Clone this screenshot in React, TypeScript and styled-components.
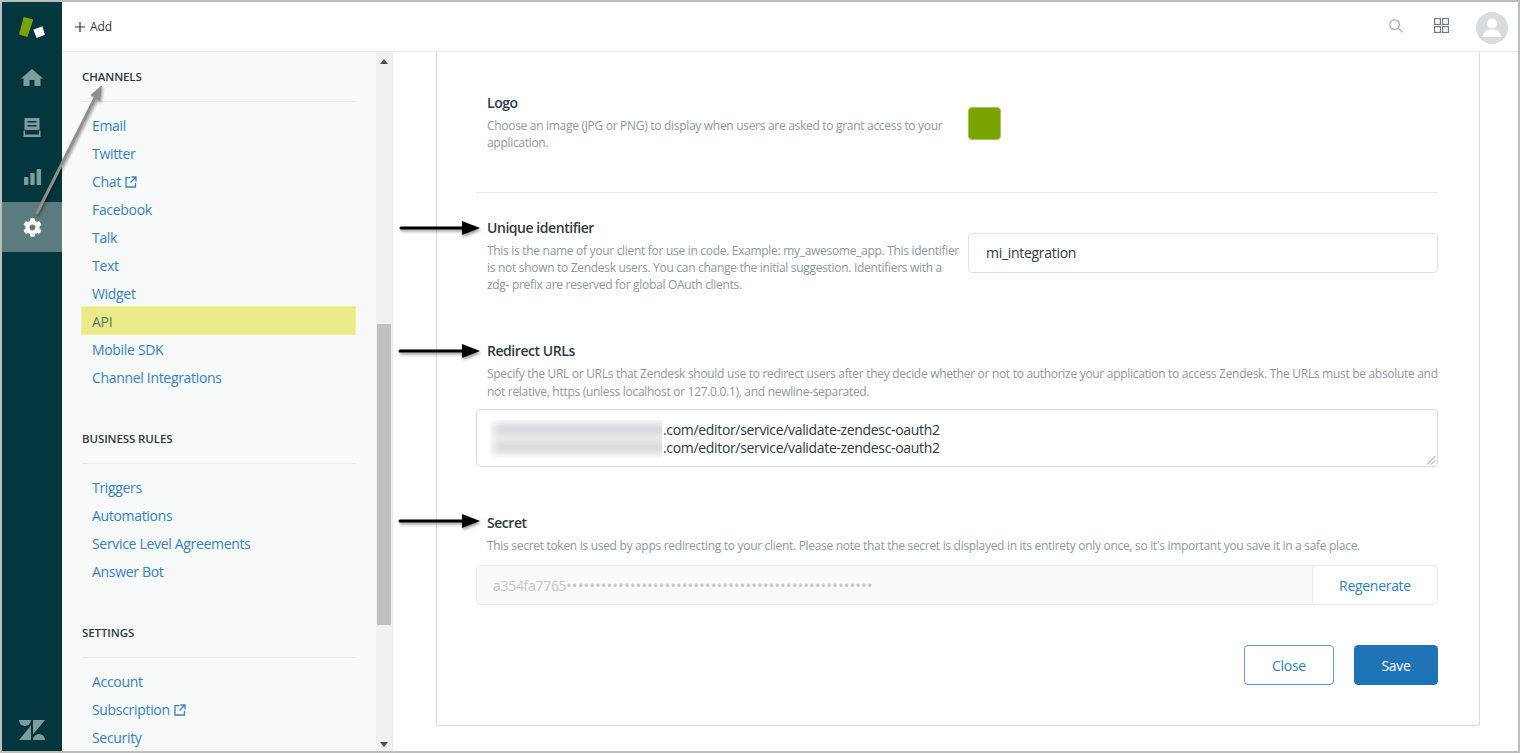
import React from 'react';
import styled, { createGlobalStyle } from 'styled-components';
import { FaCog } from 'react-icons/fa';

const FONT = `"Open Sans", "Noto Sans", "Liberation Sans", sans-serif`;
const LINK = '#3381c2';

const GlobalStyle = createGlobalStyle`
  html, body { margin: 0; padding: 0; overflow: hidden; background: #fff; }
  * { box-sizing: border-box; }
  body { font-family: ${FONT}; color: #2f3941; }
`;

const Frame = styled.div`
  position: relative;
  width: 1520px;
  height: 753px;
  border: 2px solid #bdbdbd;
  display: flex;
  overflow: hidden;
  background: #fff;
`;

const Rail = styled.nav`
  width: 60px;
  flex: none;
  background: #03363d;
  display: flex;
  flex-direction: column;
`;

const RailLogo = styled.div`
  height: 50px;
  display: flex;
  align-items: center;
  justify-content: center;
`;

const RailItem = styled.div<{ $active?: boolean }>`
  height: 50px;
  display: flex;
  align-items: center;
  justify-content: center;
  color: ${(p) => (p.$active ? '#fff' : '#7f9b9e')};
  background: ${(p) => (p.$active ? '#5c7b7e' : 'transparent')};
`;

const RailFoot = styled.div`
  margin-top: auto;
  height: 31px;
  display: flex;
  justify-content: center;
  color: #7f9b9e;
`;

const Body = styled.div`
  flex: 1;
  min-width: 0;
  display: flex;
  flex-direction: column;
`;

const Header = styled.header`
  height: 50px;
  flex: none;
  border-bottom: 1px solid #e9ebed;
  display: flex;
  align-items: center;
  padding: 0 10px 2px 13px;
`;

const AddButton = styled.div`
  display: flex;
  align-items: center;
  gap: 5px;
  padding-top: 3px;
  font-size: 12px;
  line-height: 16px;
  letter-spacing: -0.1px;
  color: #2f3941;
`;

const HeaderTools = styled.div`
  margin-left: auto;
  display: flex;
  align-items: center;
`;

const ToolIcon = styled.span<{ $gap: number }>`
  display: flex;
  margin-right: ${(p) => p.$gap}px;
  color: #87929d;
`;

const Avatar = styled.div`
  width: 32px;
  height: 32px;
  border-radius: 50%;
  margin-top: 4px;
  background: #d8dcde;
  display: flex;
  align-items: center;
  justify-content: center;
`;

const Columns = styled.div`
  flex: 1;
  min-height: 0;
  display: flex;
`;

const Sidebar = styled.aside`
  width: 331px;
  flex: none;
  display: flex;
  background: #f8f9f9;
  border-right: 1px solid #e9ebed;
`;

const SideScroll = styled.div`
  flex: 1;
  min-width: 0;
  overflow: hidden;
  padding: 14px 20px 0 20px;
`;

const Group = styled.section`
  margin-bottom: 36px;
`;

const GroupTitle = styled.h3`
  margin: 0 0 10px;
  height: 36px;
  line-height: 22px;
  padding-bottom: 13px;
  border-bottom: 1px solid #e9ebed;
  font-size: 11.5px;
  font-weight: 600;
  letter-spacing: -0.1px;
  color: #2f3941;
`;

const SideLink = styled.div<{ $on?: boolean }>`
  height: ${(p) => (p.$on ? 29 : 28)}px;
  margin: ${(p) => (p.$on ? '-2px 0 1px -1px' : '0')};
  padding: ${(p) => (p.$on ? '3px 0 0 11px' : '0 0 0 10px')};
  line-height: 28px;
  font-size: 14px;
  letter-spacing: -0.32px;
  color: ${(p) => (p.$on ? '#55756f' : LINK)};
  background: ${(p) => (p.$on ? '#e9ea8a' : 'transparent')};
  box-shadow: ${(p) => (p.$on ? 'inset 0 0 0 1px #f4f48e' : 'none')};
  display: flex;
  align-items: center;
  gap: 4px;
`;

const ScrollTrack = styled.div`
  width: 16px;
  flex: none;
  background: #f1f1f1;
  position: relative;
  display: flex;
  flex-direction: column;
  align-items: center;
  justify-content: space-between;
  padding: 7px 0 4px;
`;

const ScrollThumb = styled.div`
  position: absolute;
  left: 1px;
  right: 1px;
  top: 272px;
  height: 301px;
  background: #c1c1c1;
`;

const Main = styled.main`
  flex: 1;
  min-width: 0;
  overflow: hidden;
  padding: 0 38px 0 43px;
`;

const Card = styled.div`
  border: 1px solid #d8dcde;
  border-top: none;
  border-radius: 0 0 3px 3px;
  padding: 40px 41px 40px 39px;
`;

const FieldRow = styled.div<{ $ruled?: boolean }>`
  display: grid;
  grid-template-columns: 492px 1fr;
  padding-bottom: ${(p) => (p.$ruled ? 41 : 0)}px;
  border-bottom: ${(p) => (p.$ruled ? '1px solid #e9ebed' : 'none')};
`;

const FieldText = styled.div`
  padding-left: 11px;
  padding-right: 6px;
`;

const FieldBlock = styled.div<{ $top: number }>`
  margin-top: ${(p) => p.$top}px;
`;

const Label = styled.div`
  font-size: 14px;
  line-height: 22px;
  font-weight: 600;
  letter-spacing: -0.45px;
  color: #2f3941;
`;

const Hint = styled.p<{ $lh?: number; $inset?: boolean }>`
  margin: 3px ${(p) => (p.$inset ? -4 : 0)}px 0 0;
  padding-left: ${(p) => (p.$inset ? 11 : 0)}px;
  font-size: 12px;
  line-height: ${(p) => p.$lh ?? 17}px;
  letter-spacing: -0.3px;
  color: #8f979d;
`;

const Swatch = styled.div`
  width: 33px;
  height: 33px;
  margin-top: 15px;
  border-radius: 4px;
  background: #78a300;
  border: 1px solid #a8c45a;
`;

const TextBox = styled.div`
  height: 40px;
  margin-top: 16px;
  padding-left: 17px;
  border: 1px solid #e0e3e5;
  border-radius: 4px;
  line-height: 38px;
  font-size: 14px;
  letter-spacing: -0.3px;
  color: #2f3941;
`;

const UrlBox = styled.div`
  position: relative;
  height: 58px;
  margin-top: 8px;
  padding: 11px 0 0 186px;
  border: 1px solid #d8dcde;
  border-radius: 4px;
  font-size: 14px;
  line-height: 18px;
  letter-spacing: -0.33px;
  color: #2f3941;
`;

const BlurredUrl = styled.div`
  position: absolute;
  left: 13px;
  top: 10px;
  width: 172px;
  height: 38px;
  overflow: hidden;
`;

const BlurredLine = styled.div<{ $y: number }>`
  position: absolute;
  left: 3px;
  right: -6px;
  top: ${(p) => p.$y}px;
  height: 14px;
  background: #d6d8da;
  filter: blur(4.5px);
`;

const ResizeGrip = styled.svg`
  position: absolute;
  right: 1px;
  bottom: 1px;
`;

const SecretGroup = styled.div`
  margin-top: 10px;
  height: 40px;
  display: flex;
  border: 1px solid #e9ebed;
  border-radius: 4px;
  overflow: hidden;
`;

const SecretValue = styled.div`
  flex: 1;
  background: #f8f9f9;
  padding-left: 16px;
  line-height: 40px;
  font-size: 14px;
  letter-spacing: -0.3px;
  color: #c2c8cc;
  white-space: nowrap;
`;

const SecretDots = styled.span`
  letter-spacing: 0.52px;
`;

const SecretAction = styled.div`
  width: 125px;
  border-left: 1px solid #e9ebed;
  text-align: center;
  line-height: 40px;
  font-size: 14px;
  letter-spacing: -0.3px;
  color: ${LINK};
`;

const Actions = styled.div`
  margin-top: 40px;
  display: flex;
  justify-content: flex-end;
  gap: 20px;
`;

const Button = styled.div<{ $primary?: boolean; $w: number }>`
  width: ${(p) => p.$w}px;
  height: 40px;
  border-radius: 4px;
  border: 1px solid ${(p) => (p.$primary ? '#1f73b7' : '#5b9bcf')};
  background: ${(p) => (p.$primary ? '#1f73b7' : '#fff')};
  color: ${(p) => (p.$primary ? '#fff' : LINK)};
  text-align: center;
  line-height: 40px;
  font-size: 14px;
  letter-spacing: -0.3px;
`;

const Annotations = styled.svg`
  position: absolute;
  left: -2px;
  top: -2px;
  pointer-events: none;
`;

const ArrowShape = styled.g`
  filter: drop-shadow(1px 2px 1.5px rgba(0, 0, 0, 0.4));
`;

const ExternalIcon = () => (
  <svg width="12" height="12" viewBox="0 0 12 12" fill="none" stroke="currentColor" strokeWidth="1.3">
    <path d="M5 1.6H1v9.4h9.4V7" />
    <path d="M6.5 1h4.5v4.5M11 1 5.5 6.500" />
  </svg>
);

const channels = ['Email', 'Twitter', 'Chat', 'Facebook', 'Talk', 'Text', 'Widget', 'API', 'Mobile SDK', 'Channel Integrations'];
const businessRules = ['Triggers', 'Automations', 'Service Level Agreements', 'Answer Bot'];
const settings = ['Account', 'Subscription', 'Security'];
const external = ['Chat', 'Subscription'];

const NavGroup = ({ title, items }: { title: string; items: string[] }) => (
  <Group>
    <GroupTitle>{title}</GroupTitle>
    {items.map((item) => (
      <SideLink key={item} $on={item === 'API'}>
        {item}
        {external.includes(item) && <ExternalIcon />}
      </SideLink>
    ))}
  </Group>
);

const BlackArrow = ({ y, x1 }: { y: number; x1: number }) => (
  <ArrowShape>
    <path d={`M${x1} ${y}H466`} stroke="#000" strokeWidth="3" strokeLinecap="round" />
    <path d={`M462 ${y - 7}L480 ${y}L462 ${y + 7}Z`} fill="#000" />
  </ArrowShape>
);

export default function App() {
  return (
    <>
      <GlobalStyle />
      <Frame>
        <Rail>
          <RailLogo>
            <svg width="28" height="23" viewBox="0 0 28 23">
              <path d="M5.700 1 15.300 3.500 9.300 21 1 18.500Z" fill="#78a300" />
              <path d="M15.300 13.700 24.300 10.300 27 18.700 18.700 22Z" fill="#fff" />
            </svg>
          </RailLogo>
          <RailItem>
            <svg width="22" height="17" viewBox="0 0 22 17" fill="currentColor">
              <path d="M11 0 22 9.500H19.500V17H13.500V11H8.500V17H2.500V9.500H0Z" />
            </svg>
          </RailItem>
          <RailItem>
            <svg width="18" height="19" viewBox="0 0 18 19" fill="currentColor">
              <path d="M1.500 0h15v12h-15zM4.500 3v1.600h9V3zM4.500 7v1.600h9V7z" fillRule="evenodd" />
              <path d="M0.500 12.500H2V16.500H16V12.500H17.500V19H0.500z" />
            </svg>
          </RailItem>
          <RailItem>
            <svg width="17" height="16" viewBox="0 0 17 16" fill="currentColor">
              <rect x="0" y="8" width="4.4" height="8" rx="0.8" />
              <rect x="6.300" y="4" width="4.4" height="12" rx="0.8" />
              <rect x="12.600" y="0" width="4.4" height="16" rx="0.8" />
            </svg>
          </RailItem>
          <RailItem $active>
            <FaCog size={19} />
          </RailItem>
          <RailFoot>
            <svg width="26" height="20" viewBox="0 0 26 20" fill="currentColor">
              <path d="M0 0h12a6 6 0 0 1-12 0z" />
              <path d="M12 5.500V20H0z" />
              <path d="M14 0h12L14 14.500z" />
              <path d="M14 20a6 6 0 0 1 12 0z" />
            </svg>
          </RailFoot>
        </Rail>
        <Body>
          <Header>
            <AddButton>
              <svg width="10" height="10" viewBox="0 0 10 10" stroke="#2f3941" strokeWidth="1.2">
                <path d="M5 0v10M0 5h10" />
              </svg>
              Add
            </AddButton>
            <HeaderTools>
              <ToolIcon $gap={31}>
                <svg width="14" height="14" viewBox="0 0 14 14" fill="none" stroke="#a5adb3" strokeWidth="1.2">
                  <circle cx="5.600" cy="5.600" r="4.800" />
                  <path d="M9 9l4.400 4.400" />
                </svg>
              </ToolIcon>
              <ToolIcon $gap={27}>
                <svg width="15" height="15" viewBox="0 0 15 15" fill="none" stroke="#68737d" strokeWidth="1.1">
                  <rect x="0.600" y="0.600" width="5.800" height="5.800" />
                  <rect x="8.600" y="0.600" width="5.800" height="5.800" />
                  <rect x="0.600" y="8.600" width="5.800" height="5.800" />
                  <rect x="8.600" y="8.600" width="5.800" height="5.800" />
                </svg>
              </ToolIcon>
              <Avatar>
                <svg width="18" height="19" viewBox="0 0 18 19" fill="#fff">
                  <circle cx="9" cy="5.500" r="5" />
                  <path d="M0 19c0-5 4-7.500 9-7.500s9 2.500 9 7.500z" />
                </svg>
              </Avatar>
            </HeaderTools>
          </Header>
          <Columns>
            <Sidebar>
              <SideScroll>
                <NavGroup title="CHANNELS" items={channels} />
                <NavGroup title="BUSINESS RULES" items={businessRules} />
                <NavGroup title="SETTINGS" items={settings} />
              </SideScroll>
              <ScrollTrack>
                <svg width="8" height="5" viewBox="0 0 8 5" fill="#505050">
                  <path d="M4 0l4 5H0z" />
                </svg>
                <ScrollThumb />
                <svg width="8" height="5" viewBox="0 0 8 5" fill="#505050">
                  <path d="M0 0h8L4 5z" />
                </svg>
              </ScrollTrack>
            </Sidebar>
            <Main>
              <Card>
                <FieldRow $ruled>
                  <FieldText>
                    <Label>Logo</Label>
                    <Hint>Choose an image (JPG or PNG) to display when users are asked to grant access to your application.</Hint>
                  </FieldText>
                  <div>
                    <Swatch />
                  </div>
                </FieldRow>
                <FieldBlock $top={24}>
                  <FieldRow>
                    <FieldText>
                      <Label>Unique identifier</Label>
                      <Hint>
                        This is the name of your client for use in code. Example: my_awesome_app. This identifier is not shown to Zendesk users. You can change the initial suggestion. Identifiers with a zdg- prefix are reserved for global OAuth clients.
                      </Hint>
                    </FieldText>
                    <TextBox>mi_integration</TextBox>
                  </FieldRow>
                </FieldBlock>
                <FieldBlock $top={47}>
                  <FieldText>
                    <Label>Redirect URLs</Label>
                  </FieldText>
                  <Hint $lh={18} $inset>
                    Specify the URL or URLs that Zendesk should use to redirect users after they decide whether or not to authorize your application to access Zendesk. The URLs must be absolute and not relative, https (unless localhost or 127.0.0.1), and newline-separated.
                  </Hint>
                  <UrlBox>
                    <BlurredUrl>
                      <BlurredLine $y={3} />
                      <BlurredLine $y={20} />
                    </BlurredUrl>
                    .com/editor/service/validate-zendesc-oauth2
                    <br />
                    .com/editor/service/validate-zendesc-oauth2
                    <ResizeGrip width="10" height="10" viewBox="0 0 10 10" stroke="#8a8a8a" strokeWidth="0.9">
                      <path d="M1 9.500 9.500 1M5 9.500 9.500 5" />
                    </ResizeGrip>
                  </UrlBox>
                </FieldBlock>
                <FieldBlock $top={45}>
                  <FieldText>
                    <Label>Secret</Label>
                  </FieldText>
                  <Hint $lh={18} $inset>
                    This secret token is used by apps redirecting to your client. Please note that the secret is displayed in its entirety only once, so it's important you save it in a safe place.
                  </Hint>
                  <SecretGroup>
                    <SecretValue>
                      a354fa7765<SecretDots>{'•'.repeat(53)}</SecretDots>
                    </SecretValue>
                    <SecretAction>Regenerate</SecretAction>
                  </SecretGroup>
                </FieldBlock>
                <Actions>
                  <Button $w={90}>Close</Button>
                  <Button $w={84} $primary>
                    Save
                  </Button>
                </Actions>
              </Card>
            </Main>
          </Columns>
        </Body>
        <Annotations width="1520" height="753" viewBox="0 0 1520 753">
          <ArrowShape>
            <path d="M37 213 95 98" stroke="#8f8f8f" strokeWidth="3" strokeLinecap="round" />
            <path d="M102 85 100 101 90.500 95Z" fill="#8f8f8f" />
          </ArrowShape>
          <BlackArrow y={228} x1={401} />
          <BlackArrow y={351} x1={400} />
          <BlackArrow y={521} x1={400} />
        </Annotations>
      </Frame>
    </>
  );
}
